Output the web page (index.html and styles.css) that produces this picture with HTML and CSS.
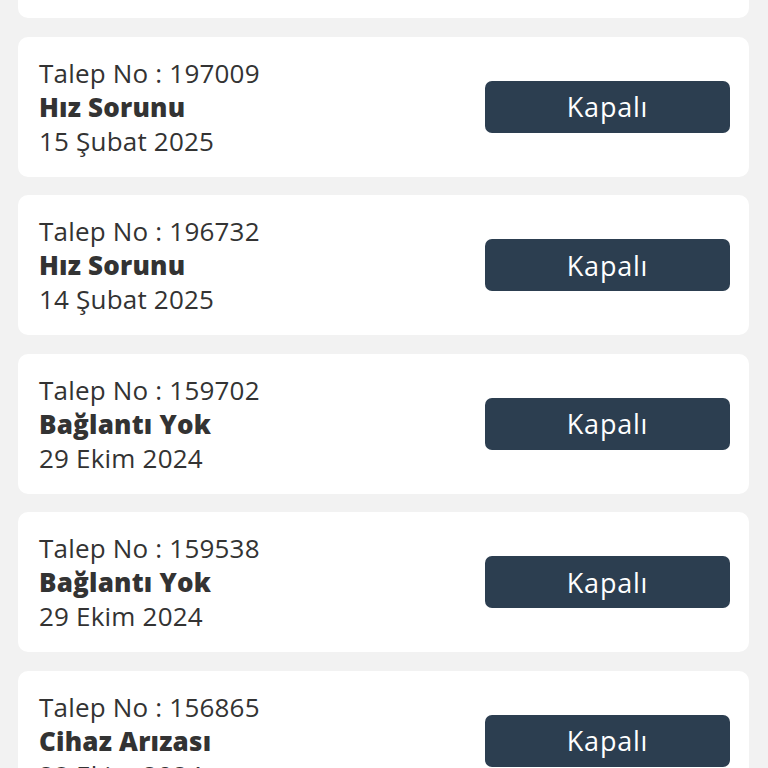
FILE: index.html
```html
<!DOCTYPE html>
<html lang="tr">
<head>
    <meta charset="UTF-8">
    <meta name="viewport" content="width=device-width, initial-scale=1.0">
    <title>Taleplerim</title>
    <link rel="stylesheet" href="styles.css">
</head>
<body>
    <div class="list">
        <div class="card">
            <div class="info">
                <div class="no">Talep No : 199214</div>
                <div class="subject">Hız Sorunu</div>
                <div class="date">20 Şubat 2025</div>
            </div>
            <button class="status">Kapalı</button>
        </div>
        <div class="card">
            <div class="info">
                <div class="no">Talep No : 197009</div>
                <div class="subject">Hız Sorunu</div>
                <div class="date">15 Şubat 2025</div>
            </div>
            <button class="status">Kapalı</button>
        </div>
        <div class="card">
            <div class="info">
                <div class="no">Talep No : 196732</div>
                <div class="subject">Hız Sorunu</div>
                <div class="date">14 Şubat 2025</div>
            </div>
            <button class="status">Kapalı</button>
        </div>
        <div class="card">
            <div class="info">
                <div class="no">Talep No : 159702</div>
                <div class="subject">Bağlantı Yok</div>
                <div class="date">29 Ekim 2024</div>
            </div>
            <button class="status">Kapalı</button>
        </div>
        <div class="card">
            <div class="info">
                <div class="no">Talep No : 159538</div>
                <div class="subject">Bağlantı Yok</div>
                <div class="date">29 Ekim 2024</div>
            </div>
            <button class="status">Kapalı</button>
        </div>
        <div class="card">
            <div class="info">
                <div class="no">Talep No : 156865</div>
                <div class="subject">Cihaz Arızası</div>
                <div class="date">28 Ekim 2024</div>
            </div>
            <button class="status">Kapalı</button>
        </div>
    </div>
</body>
</html>
```

FILE: styles.css
```css
html, body {
    height: 100%;
    overflow: hidden;
}
body {
    margin: 0;
    padding: 0 19px 0 18px;
    background-color: #f2f2f2;
    font-family: "Open Sans", "Noto Sans", sans-serif;
    color: #333;
}
.list {
    margin-top: -122px;
}
.card {
    display: flex;
    align-items: center;
    justify-content: space-between;
    height: 140px;
    padding: 0 19px 0 21px;
    margin-bottom: 18.5px;
    background-color: #fff;
    border-radius: 10px;
    box-sizing: border-box;
}
.info {
    font-size: 26px;
    line-height: 34px;
    letter-spacing: 0.2px;
}
.subject {
    font-weight: 800;
}
.status {
    width: 245px;
    height: 52px;
    border: none;
    border-radius: 7px;
    background-color: #2c3e50;
    color: #fff;
    font-family: "Open Sans", "Noto Sans", sans-serif;
    font-size: 27px;
    font-weight: 500;
    letter-spacing: 0.8px;
    cursor: pointer;
}
```
